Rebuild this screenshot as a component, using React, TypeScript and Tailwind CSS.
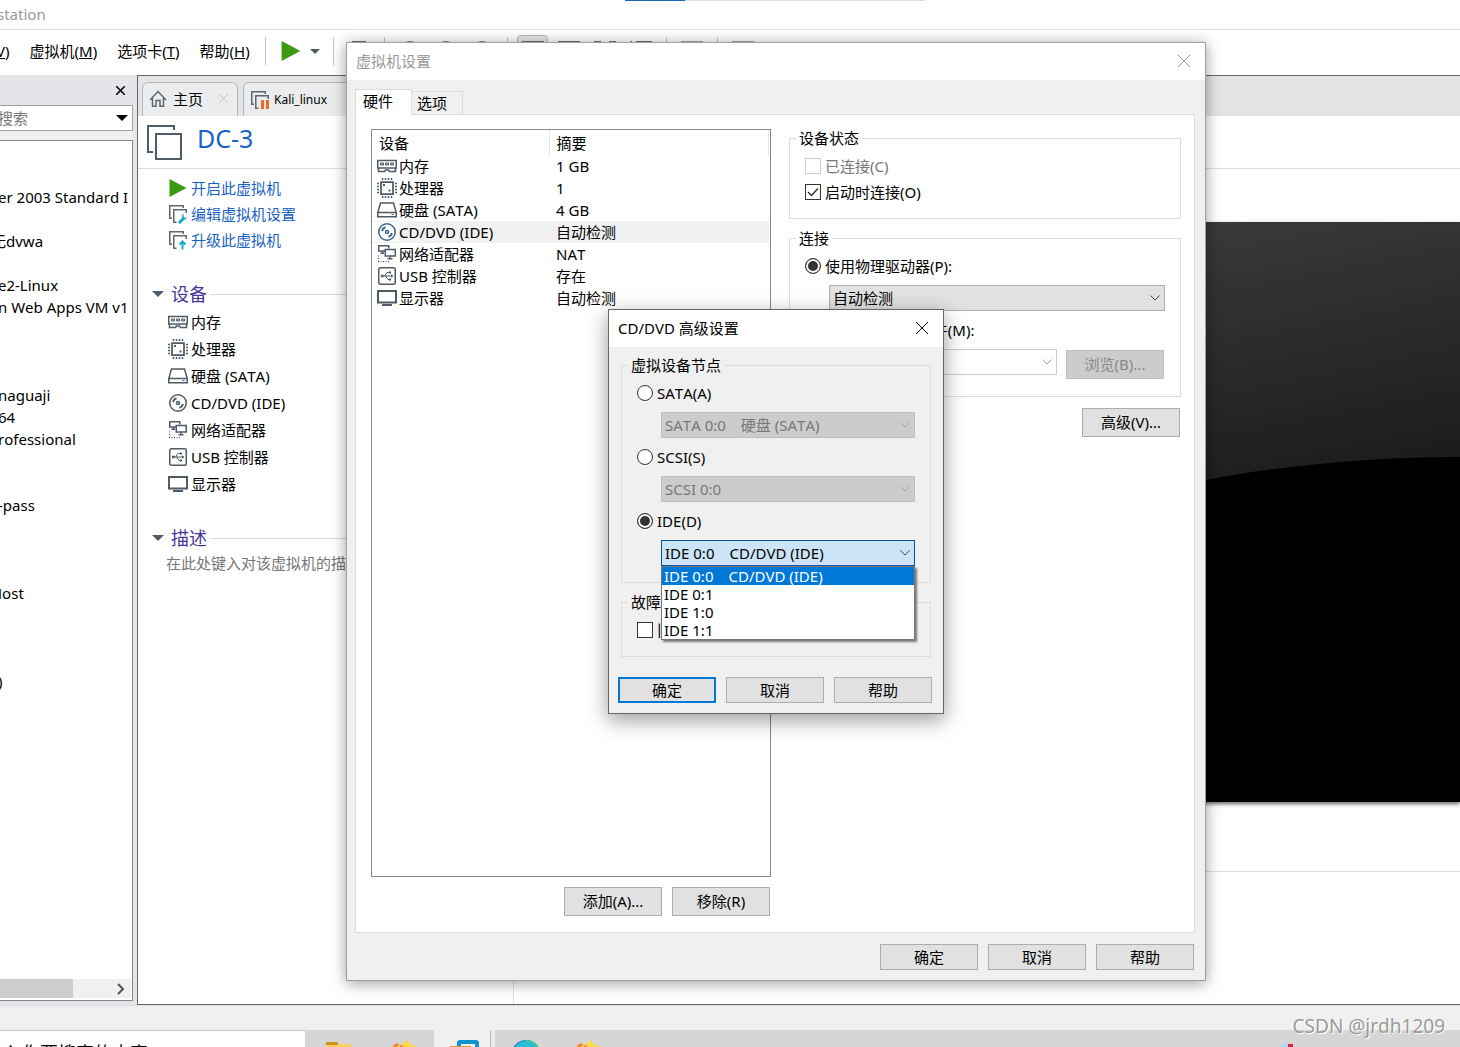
import type { ReactNode } from "react";

type DeviceKind = "memory" | "cpu" | "disk" | "cd" | "network" | "usb" | "display";

interface Device {
  kind: DeviceKind;
  name: string;
  summary: string;
}

const devices: Device[] = [
  { kind: "memory", name: "内存", summary: "1 GB" },
  { kind: "cpu", name: "处理器", summary: "1" },
  { kind: "disk", name: "硬盘 (SATA)", summary: "4 GB" },
  { kind: "cd", name: "CD/DVD (IDE)", summary: "自动检测" },
  { kind: "network", name: "网络适配器", summary: "NAT" },
  { kind: "usb", name: "USB 控制器", summary: "存在" },
  { kind: "display", name: "显示器", summary: "自动检测" },
];

// empty strings are rows whose names are scrolled out of view
const library = [
  "", "", "er 2003 Standard I", "", "无dvwa", "", "e2-Linux", "n Web Apps VM v1",
  "", "", "", "naguaji", "64", "rofessional", "", "", "-pass", "", "", "",
  "Host", "", "", "", ")",
];

const ideNodes = ["IDE 0:0\u3000CD/DVD (IDE)", "IDE 0:1", "IDE 1:0", "IDE 1:1"];

function DeviceIcon({ kind, className = "text-[#4f5b66]" }: { kind: DeviceKind; className?: string }) {
  const shapes: Record<DeviceKind, ReactNode> = {
    memory: (
      <>
        <path d="M.75 4.5h18.5V12H.75z" />
        <path d="M1.5 12v3.5h6l1-1.500h3l1 1.500h6V12" strokeWidth="1.5" />
        <path d="M3.5 7h3v2h-3zM8.5 7h3v2h-3zM13.5 7h3v2h-3z" fill="currentColor" fillOpacity=".35" strokeWidth="1" />
      </>
    ),
    cpu: (
      <>
        <path d="M4 4h12v12H4z" strokeWidth="1.75" />
        <path
          d="M5.5 0v2M8.5 0v2M11.5 0v2M14.5 0v2M5.5 18v2M8.5 18v2M11.5 18v2M14.5 18v2M0 5.5h2M0 8.5h2M0 11.5h2M0 14.5h2M18 5.5h2M18 8.5h2M18 11.5h2M18 14.5h2"
        />
        <path d="M6 6h2v2H6zM11.500 11.500h2v2h-2z" fill="currentColor" stroke="none" />
      </>
    ),
    disk: (
      <>
        <path d="M3.5 3h13l2.75 9.5v4.25H.75V12.5z" />
        <path d="M.75 12.5h18.5" />
        <path d="M14.5 14.5h2" strokeWidth="1" />
      </>
    ),
    cd: (
      <>
        <circle cx="10" cy="10" r="8.25" />
        <circle cx="10" cy="10" r="1.5" />
        <path d="M5 9a5.2 5.2 0 0 1 3.5-3.7M15 11a5.2 5.2 0 0 1-3.5 3.7" strokeWidth="2" />
      </>
    ),
    network: (
      <>
        <path d="M8 7H1.75V1.75h10V4.5" />
        <path d="M8.25 5.5h10V12h-10z" />
        <path d="M13 12.5v2M10.5 14.75h5M5.5 7v2M3.5 9.25H7" />
        <path d="M1.5 11.5v6M1 17.5h12" strokeDasharray="1 1.5" strokeWidth="1.25" />
      </>
    ),
    usb: (
      <>
        <rect x="1.75" y="1.75" width="16.5" height="16.5" rx="1.5" />
        <path d="M4.5 10h10M7.5 10l2.5-3.5h2M8.5 10l2.5 3.5h1.5" strokeWidth="1" />
        <path d="M4 8.75h2.5v2.5H4zM12 5.5h2v2h-2zM12 12.5h2v2h-2zM14 8.25l2.5 1.75-2.5 1.75z" fill="currentColor" stroke="none" />
      </>
    ),
    display: (
      <>
        <path d="M1 3h18v11.5H1z" strokeWidth="2" />
        <path d="M5 17h10" strokeWidth="2" />
      </>
    ),
  };
  return (
    <svg viewBox="0 0 20 20" className={`size-5 shrink-0 ${className}`} fill="none" stroke="currentColor" strokeWidth="1.5">
      {shapes[kind]}
    </svg>
  );
}

function StackIcon({ badge }: { badge?: ReactNode }) {
  return (
    <svg viewBox="0 0 20 20" className="size-5 shrink-0" fill="none" stroke="#5c6770" strokeWidth="1.5">
      <path d="M4 14.25H1.75V1.75h13.5V4" />
      <path d="M8.5 18.25H5.75V5.75h12.5V9" />
      {badge}
    </svg>
  );
}

function CloseIcon({ className }: { className: string }) {
  return (
    <svg viewBox="0 0 12 12" className={`shrink-0 ${className}`} fill="none" stroke="currentColor">
      <path d="M0 0l12 12M12 0L0 12" />
    </svg>
  );
}

function PlayIcon({ className }: { className: string }) {
  return (
    <svg viewBox="0 0 20 20" className={`shrink-0 ${className}`}>
      <path d="M1.5 1l17 9-17 9z" fill="#3c9a12" />
    </svg>
  );
}

function Caret({ className }: { className: string }) {
  return (
    <svg viewBox="0 0 12 6" className={`shrink-0 ${className}`}>
      <path d="M0 0h12L6 6z" fill="currentColor" />
    </svg>
  );
}

interface PushButtonProps {
  children: ReactNode;
  tall?: boolean;
  primary?: boolean;
  disabled?: boolean;
}

function PushButton({ children, tall, primary, disabled }: PushButtonProps) {
  return (
    <button
      type="button"
      disabled={disabled}
      className={`w-[98px] shrink-0 bg-[#e1e1e1] leading-5 disabled:border-[#bfbfbf] disabled:bg-[#cccccc] disabled:text-[#8a8a8a] ${
        tall ? "h-[29px] pb-0.5" : "h-[26px]"
      } ${primary ? "border-2 border-[#0078d7]" : "border border-[#adadad]"}`}
    >
      {children}
    </button>
  );
}

function Combo({ label, options, className, disabled }: { label: string; options: string[]; className: string; disabled?: boolean }) {
  return (
    <div className="relative">
      <select aria-label={label} disabled={disabled} className={`block h-[26px] w-full appearance-none border pl-[3px] opacity-100 ${className}`}>
        {options.map((option) => (
          <option key={option}>{option}</option>
        ))}
      </select>
      <svg
        viewBox="0 0 10 6"
        className={`pointer-events-none absolute top-2.5 right-[5px] h-1.5 w-2.5 ${disabled ? "text-[#a5a5a5]" : "text-[#444]"}`}
        fill="none"
        stroke="currentColor"
      >
        <path d="M.5.5L5 5 9.5.5" />
      </svg>
    </div>
  );
}

function Check({ label, checked, disabled }: { label: string; checked?: boolean; disabled?: boolean }) {
  return (
    <label className={`relative flex h-[26px] items-center gap-1 ${disabled ? "text-[#777]" : ""}`}>
      <input
        type="checkbox"
        defaultChecked={checked}
        disabled={disabled}
        className="peer size-4 shrink-0 appearance-none border border-[#333] bg-white disabled:border-[#ccc]"
      />
      <svg viewBox="0 0 16 16" className="absolute left-0 hidden size-4 peer-checked:block" fill="none" stroke="#333" strokeWidth="1.5">
        <path d="M3 8l3.5 3.5L13 4.5" />
      </svg>
      {label}
    </label>
  );
}

function Radio({ label, name, checked }: { label: string; name: string; checked?: boolean }) {
  return (
    <label className="flex h-[26px] items-center gap-1">
      <input
        type="radio"
        name={name}
        defaultChecked={checked}
        className="size-4 shrink-0 appearance-none rounded-full border border-[#333] bg-white checked:bg-[#333] checked:shadow-[inset_0_0_0_2px_#fff]"
      />
      {label}
    </label>
  );
}

function ToolSeparator() {
  return <div className="mx-[7px] h-7 w-px bg-[#c4c4c4]" />;
}

function ToolButton({ children, label, active }: { children: ReactNode; label: string; active?: boolean }) {
  return (
    <button type="button" aria-label={label} className="flex w-9 justify-center">
      <span className={`flex h-[33px] w-[31px] items-center justify-center rounded-sm ${active ? "border border-[#b4b8bc] bg-[#e3e6e8]" : ""}`}>
        <svg viewBox="0 0 22 20" className="h-5 w-[22px] shrink-0" fill="none" stroke="#6b757d" strokeWidth="2">
          {children}
        </svg>
      </span>
    </button>
  );
}

function MenuBar() {
  return (
    <div className="flex h-[45px] shrink-0 items-center bg-white pb-[3px]">
      <nav className="-ml-1 flex shrink-0 gap-5 whitespace-nowrap">
        <button type="button"><u>V</u>)</button>
        <button type="button">虚拟机(<u>M</u>)</button>
        <button type="button">选项卡(<u>T</u>)</button>
        <button type="button">帮助(<u>H</u>)</button>
      </nav>
      <div className="ml-[15px] h-7 w-px bg-[#c4c4c4]" />
      <button type="button" aria-label="开启" className="ml-3.5 flex items-center gap-2">
        <PlayIcon className="size-[22px]" />
        <Caret className="h-[5px] w-2.5 text-[#4f5b66]" />
      </button>
      <div className="ml-1.5 flex items-center">
        <ToolSeparator />
        <ToolButton label="发送"><path d="M5 1h12v18H5z" /></ToolButton>
        <ToolSeparator />
        <ToolButton label="拍摄快照"><circle cx="11" cy="10" r="9" /></ToolButton>
        <ToolButton label="恢复快照"><circle cx="11" cy="10" r="9" /></ToolButton>
        <ToolButton label="管理快照"><circle cx="11" cy="10" r="9" /></ToolButton>
        <ToolSeparator />
        <ToolButton label="显示库" active><path d="M1 1h20v18H1zM8 2v16" /></ToolButton>
        <ToolButton label="缩略图"><path d="M1 1h20v18H1zM1 13h20" /></ToolButton>
        <ToolButton label="全屏"><path d="M1 6V1h6M15 1h6v5M21 14v5h-6M7 19H1v-5" /></ToolButton>
        <ToolButton label="Unity"><path d="M0 0l4 4M7 1h14v12H7z" /></ToolButton>
        <ToolSeparator />
        <ToolButton label="控制台"><path d="M1 1h20v18H1z" stroke="#a5a9ad" /></ToolButton>
        <ToolSeparator />
        <ToolButton label="拉伸"><path d="M1 1h20v18H1z" stroke="#a5a9ad" /></ToolButton>
      </div>
    </div>
  );
}

function LibraryPanel() {
  return (
    <aside className="w-[137px] shrink-0 bg-[#e3e5e9] pb-1">
      <div className="flex h-full w-[133px] flex-col">
        <div className="flex h-[30px] shrink-0 items-center justify-end pr-2">
          <button type="button" aria-label="关闭库" className="text-black">
            <svg viewBox="0 0 9 9" className="size-[9px]" fill="none" stroke="currentColor" strokeWidth="1.5">
              <path d="M0 0l9 9M9 0L0 9" />
            </svg>
          </button>
        </div>
        <div className="flex h-[26px] shrink-0 items-center border border-l-0 border-[#a0a4a9] bg-white pr-1">
          <input
            aria-label="搜索"
            placeholder="搜索"
            className="-ml-0.5 w-full min-w-0 bg-transparent placeholder:text-[#777] focus:outline-none"
          />
          <Caret className="h-1.5 w-3 text-black" />
        </div>
        <div className="h-[9px] shrink-0 bg-[#f0f0f0]" />
        <div className="flex min-h-0 flex-1 flex-col overflow-hidden border border-l-0 border-[#828790] bg-white">
          <ul className="-ml-0.5 min-h-0 flex-1 overflow-hidden pt-px whitespace-nowrap">
            {library.map((name, idx) => (
              <li key={idx} className={`h-[22px] leading-[22px] ${name === "Host" || name === "无dvwa" ? "-indent-[7px]" : ""}`}>
                {name}
              </li>
            ))}
          </ul>
          <div className="mr-px mb-0.5 flex h-[19px] shrink-0 items-center justify-between bg-[#f0f0f0]">
            <div className="h-full w-[73px] bg-[#cdcdcd]" />
            <svg viewBox="0 0 8 12" className="mr-1.5 h-3 w-2" fill="none" stroke="#505050" strokeWidth="2">
              <path d="M1 1l5 5-5 5" />
            </svg>
          </div>
        </div>
      </div>
    </aside>
  );
}

function SectionHeading({ children }: { children: ReactNode }) {
  return (
    <div className="flex h-7 items-center pl-3.5">
      <Caret className="mr-[7px] h-1.5 w-3 text-[#4f5b66]" />
      <h2 className="text-lg text-[#46369a]">{children}</h2>
      <div className="ml-[3px] h-px flex-1 bg-[#d9d9d9]" />
    </div>
  );
}

function VmSummary() {
  return (
    <div className="w-[376px] shrink-0 border-r border-[#dcdcdc]">
      <ul className="pt-1.5 pl-[30px] text-[#1a63c4]">
        <li>
          <a href="#start" className="flex h-[26px] items-center gap-[3px]">
            <PlayIcon className="size-5" />
            开启此虚拟机
          </a>
        </li>
        <li>
          <a href="#edit" className="flex h-[26px] items-center gap-[3px]">
            <StackIcon
              badge={
                <>
                  <path d="M11 19l5-5" stroke="#1fa9c9" strokeWidth="3" />
                  <path d="M15.5 9.5a3 3 0 1 0 4 4l-2.5.5-1.5-1.5z" fill="#1fa9c9" stroke="none" />
                </>
              }
            />
            编辑虚拟机设置
          </a>
        </li>
        <li>
          <a href="#upgrade" className="flex h-[26px] items-center gap-[3px]">
            <StackIcon badge={<path d="M14.5 19.5V12M11.5 14.5l3-3 3 3" stroke="#1fa9c9" strokeWidth="2" />} />
            升级此虚拟机
          </a>
        </li>
      </ul>
      <div className="mt-[27px]">
        <SectionHeading>设备</SectionHeading>
        <ul className="pl-[30px]">
          {devices.map((device) => (
            <li key={device.kind} className="flex h-[27px] items-center gap-[3px]">
              <DeviceIcon kind={device.kind} />
              {device.name}
            </li>
          ))}
        </ul>
      </div>
      <div className="mt-[27px]">
        <SectionHeading>描述</SectionHeading>
        <p className="pl-7 leading-[22px] text-[#777]">在此处键入对该虚拟机的描述。</p>
      </div>
    </div>
  );
}

function VmScreen() {
  return (
    <div className="min-w-0 flex-1">
      <div className="border-b border-[#dcdcdc] pt-[53px] pb-[69px]">
        <svg viewBox="0 0 946 580" preserveAspectRatio="none" className="block h-[580px] w-full shadow-[0_2px_4px_rgba(0,0,0,0.6)]">
          <defs>
            <linearGradient id="glass" x1="0.7" y1="0" x2="0.85" y2="0.45">
              <stop offset="0" stopColor="#3a3a3a" />
              <stop offset="1" stopColor="#1c1c1c" />
            </linearGradient>
          </defs>
          <path d="M0 0h946v580H0z" fill="url(#glass)" />
          <path d="M0 580V480Q300 320 692 258C770 243 860 235 946 235V580z" fill="#000" />
        </svg>
      </div>
    </div>
  );
}

function Workspace() {
  return (
    <main className="flex min-w-0 flex-1 flex-col border-t border-b border-l border-[#666] bg-white">
      <div className="flex h-10 shrink-0 items-end bg-[#e3e4e6] pl-1">
        <div className="flex h-[34px] w-24 items-center rounded-t-md border border-b-0 border-[#b3b5b8] bg-[#ebecee] pb-0.5 pl-1.5">
          <svg viewBox="0 0 18 18" className="mr-1.5 size-[18px] shrink-0" fill="none" stroke="#5c6770" strokeWidth="1.5">
            <path d="M1 10l8-8.5 8 8.5M3.5 8v8.25H7V10.5h4v5.75h3.5V8" />
          </svg>
          主页
          <button type="button" aria-label="关闭主页" className="ml-4 text-[#b8b8b8]">
            <CloseIcon className="size-[9px]" />
          </button>
        </div>
        <div className="ml-[5px] flex h-[34px] w-40 items-center gap-1 rounded-t-md border border-b-0 border-[#b3b5b8] bg-[#ebecee] pl-1.5 text-xs">
          <StackIcon
            badge={
              <>
                <path d="M9.5 9h10v11h-10z" fill="#ebecee" stroke="none" />
                <path d="M12.5 10v9M17.5 10v9" stroke="#ee6b21" strokeWidth="3" />
              </>
            }
          />
          Kali_linux
        </div>
      </div>
      <header className="flex h-[53px] shrink-0 items-center gap-[15px] border-b border-[#dcdcdc] pl-[9px]">
        <svg viewBox="0 0 35 35" className="size-[35px]" fill="none" stroke="#4f5b66" strokeWidth="2">
          <path d="M6 27H1V1h26v4" />
          <path d="M9 9h25v25H9z" />
        </svg>
        <h1 className="pb-2 text-[25px] leading-8 text-[#1a63c4]">DC-3</h1>
      </header>
      <div className="flex min-h-0 flex-1">
        <VmSummary />
        <VmScreen />
      </div>
    </main>
  );
}

function DeviceTable() {
  return (
    <div className="h-[748px] border border-[#828790] bg-white pr-px">
      <table className="w-full border-collapse text-left leading-5">
        <thead>
          <tr className="h-[25px]">
            <th className="w-[177px] border-r border-[#e5e5e5] pl-[7px] font-normal">设备</th>
            <th className="border-r border-[#e5e5e5] pl-[7px] font-normal">摘要</th>
          </tr>
        </thead>
        <tbody>
          {devices.map((device) => {
            const selected = device.kind === "cd";
            return (
              <tr key={device.kind} className={`h-[22px] ${selected ? "bg-[#f0f0f0]" : ""}`}>
                <td className="p-0">
                  <div className="flex items-center">
                    <span className="bg-white pr-0.5 pl-[5px]">
                      <DeviceIcon kind={device.kind} className={selected ? "text-[#3d6690]" : "text-[#4f5b66]"} />
                    </span>
                    {device.name}
                  </div>
                </td>
                <td className="p-0 pl-[7px]">{device.summary}</td>
              </tr>
            );
          })}
        </tbody>
      </table>
    </div>
  );
}

function SettingsWindow() {
  return (
    <section
      aria-label="虚拟机设置"
      className="absolute top-[42px] left-[346px] w-[860px] border border-[#a0a0a0] bg-[#f0f0f0] shadow-[0_2px_14px_rgba(0,0,0,0.4)]"
    >
      <header className="flex h-[37px] items-center justify-between bg-white pr-[15px] pb-0.5 pl-[9px] text-[#999]">
        <h2>虚拟机设置</h2>
        <button type="button" aria-label="关闭">
          <CloseIcon className="size-3" />
        </button>
      </header>
      <div className="px-2 pt-[9px] pb-2.5">
        <div role="tablist" className="flex items-end">
          <button type="button" role="tab" aria-selected="true" className="relative z-10 -mb-px h-[26px] w-[57px] border border-b-0 border-[#dcdcdc] bg-white pb-1 pl-[7px] text-left leading-5">
            硬件
          </button>
          <button type="button" role="tab" aria-selected="false" className="h-[23px] w-[51px] border border-b-0 border-l-0 border-[#dcdcdc] pl-[5px] text-left leading-5">
            选项
          </button>
        </div>
        <div className="mr-0.5 flex gap-[18px] border border-[#dcdcdc] bg-white pt-[13px] pr-[13px] pb-4 pl-[15px]">
          <div className="w-[400px] shrink-0 pt-px">
            <DeviceTable />
            <div className="mt-2.5 mr-px flex justify-end gap-2.5">
              <PushButton tall>添加(A)...</PushButton>
              <PushButton tall>移除(R)</PushButton>
            </div>
          </div>
          <div className="min-w-0 flex-1">
            <fieldset className="h-[91px] border border-[#dcdcdc] px-[15px]">
              <legend className="-ml-[9px] px-[3px] leading-5">设备状态</legend>
              <div className="pt-[5px]">
                <Check label="已连接(C)" disabled />
                <Check label="启动时连接(O)" checked />
              </div>
            </fieldset>
            <fieldset className="mt-[9px] border border-[#dcdcdc] px-[15px] pb-[17px]">
              <legend className="-ml-[9px] px-[3px] leading-5">连接</legend>
              <div className="pt-[5px]">
                <Radio label="使用物理驱动器(P):" name="source" checked />
                <div className="mt-1.5 pl-6">
                  <Combo label="物理驱动器" options={["自动检测"]} className="border-[#adadad] bg-[#e1e1e1]" />
                </div>
                <div className="mt-1.5">
                  <Radio label="使用 ISO 映像文件(M):" name="source" />
                </div>
                <div className="mt-1.5 mr-px flex items-start gap-[9px] pl-6">
                  <div className="flex-1">
                    <Combo label="ISO 映像文件" options={[""]} disabled className="border-[#ccc] bg-white" />
                  </div>
                  <div className="pt-px">
                    <PushButton tall disabled>浏览(B)...</PushButton>
                  </div>
                </div>
              </div>
            </fieldset>
            <div className="mt-[11px] mr-px flex justify-end">
              <PushButton tall>高级(V)...</PushButton>
            </div>
          </div>
        </div>
        <div className="mt-[11px] mr-[3px] flex justify-end gap-2.5">
          <PushButton>确定</PushButton>
          <PushButton>取消</PushButton>
          <PushButton>帮助</PushButton>
        </div>
      </div>
    </section>
  );
}

function AdvancedWindow() {
  return (
    <section
      aria-label="CD/DVD 高级设置"
      className="absolute top-[309px] left-[608px] w-[336px] border border-[#666] bg-[#f0f0f0] shadow-[0_6px_20px_rgba(0,0,0,0.4)]"
    >
      <header className="flex h-[37px] items-center justify-between bg-white pr-[15px] pb-0.5 pl-[9px]">
        <h2>CD/DVD 高级设置</h2>
        <button type="button" aria-label="关闭">
          <CloseIcon className="size-3" />
        </button>
      </header>
      <div className="px-3 pt-2 pb-2.5">
        <fieldset className="border border-[#dcdcdc] px-[15px] pb-4">
          <legend className="-ml-[9px] px-[3px] leading-5">虚拟设备节点</legend>
          <div className="flex flex-col gap-1.5 pt-[5px]">
            <Radio label="SATA(A)" name="node" />
            <div className="pl-6">
              <Combo label="SATA 节点" options={["SATA 0:0\u3000硬盘 (SATA)"]} disabled className="border-[#bfbfbf] bg-[#ccc] text-[#777]" />
            </div>
            <Radio label="SCSI(S)" name="node" />
            <div className="pl-6">
              <Combo label="SCSI 节点" options={["SCSI 0:0"]} disabled className="border-[#bfbfbf] bg-[#ccc] text-[#777]" />
            </div>
            <Radio label="IDE(D)" name="node" checked />
            <div className="relative pl-6">
              <Combo label="IDE 节点" options={ideNodes} className="border-[#005499] bg-[#cce4f7]" />
              <ul
                role="listbox"
                aria-label="IDE 节点选项"
                className="absolute top-full right-0 left-6 z-10 border border-[#777] bg-white shadow-[2px_2px_2px_rgba(0,0,0,0.5)]"
              >
                {ideNodes.map((node, idx) => (
                  <li
                    key={node}
                    role="option"
                    aria-selected={idx === 0}
                    className={`h-[18px] pl-0.5 leading-[18px] ${idx === 0 ? "bg-[#0078d7] text-white" : ""}`}
                  >
                    {node}
                  </li>
                ))}
              </ul>
            </div>
          </div>
        </fieldset>
        <fieldset className="mt-[9px] border border-[#dcdcdc] px-[15px] pb-[13px]">
          <legend className="-ml-[9px] px-[3px] leading-5">故障排除</legend>
          <div className="pt-[5px]">
            <Check label="旧版仿真(L)" />
          </div>
        </fieldset>
        <div className="-ml-[3px] mt-5 flex gap-2.5">
          <PushButton primary>确定</PushButton>
          <PushButton>取消</PushButton>
          <PushButton>帮助</PushButton>
        </div>
      </div>
    </section>
  );
}

function SparkIcon() {
  return (
    <svg viewBox="0 0 28 20" className="h-5 w-7" fill="none">
      <path d="M2 8l5-5 4 2-4 15H4z" fill="#f0872b" />
      <path d="M8 6l6-2 4-4 3 5 7 1-5 6 1 8H9z" fill="#ffd83b" />
      <path d="M11 5l4 2-2 4z" fill="#e9557a" />
    </svg>
  );
}

function TaskBar() {
  return (
    <footer className="flex h-[17px] shrink-0 overflow-hidden bg-[#d6d6d6]">
      <div className="w-[305px] shrink-0 border-t border-[#c8c8c8] bg-white pt-2.5 pl-1 text-lg leading-6 whitespace-nowrap">
        入你要搜索的内容
      </div>
      <div className="flex w-[129px] shrink-0 items-start gap-9 pt-2.5 pl-5">
        <svg viewBox="0 0 28 20" className="h-5 w-7">
          <path d="M1 2h12v4H1z" fill="#cf9716" />
          <path d="M1 5h12l2-1h12v16H1z" fill="#f8cf62" />
        </svg>
        <SparkIcon />
      </div>
      <div className="w-14 shrink-0 bg-[#f0f0f0] pt-2.5 pl-4">
        <svg viewBox="0 0 30 20" className="h-5 w-[30px]" fill="none" strokeWidth="4">
          <path d="M9 16V3q0-1 1-1h16q1 0 1 1v17" stroke="#0f93d2" />
          <path d="M2 20V8h17v12" stroke="#e8952c" />
        </svg>
      </div>
      <div className="w-[5px] shrink-0 border-l border-[#bdbdbd] bg-[#ebebeb]" />
      <div className="flex flex-1 items-start gap-8 pt-2.5 pl-4">
        <svg viewBox="0 0 30 30" className="size-[30px]">
          <circle cx="15" cy="15" r="15" fill="#1b8fd6" />
          <path d="M15 0a15 15 0 0 1 15 15H13z" fill="#43cf7c" />
          <path d="M2 9Q8 0 17 1q7 1 9 8z" fill="#2bbdd0" />
        </svg>
        <SparkIcon />
      </div>
      <svg viewBox="0 0 20 20" className="mt-3.5 mr-[163px] size-5 shrink-0">
        <circle cx="9" cy="9" r="9" fill="#a9d8ee" />
        <path d="M11 0h5v6h-5z" fill="#e02040" />
      </svg>
    </footer>
  );
}

export default function App() {
  return (
    <div className="relative flex h-screen flex-col overflow-hidden bg-[#f0f0f0] font-['Noto_Sans','Noto_Sans_CJK_SC',sans-serif] text-[15px] leading-5 text-black [font-kerning:none]">
      <div className="flex h-[30px] shrink-0 items-center border-b border-[#dedede] bg-white pb-0.5 text-[#999]">
        <span className="-ml-[3px]">station</span>
      </div>
      <div className="absolute top-0 left-[625px] h-px w-[300px] bg-[#ddd]">
        <div className="h-full w-[60px] bg-[#1a63b4]" />
      </div>
      <MenuBar />
      <div className="flex min-h-0 flex-1">
        <LibraryPanel />
        <Workspace />
      </div>
      <div className="h-[25px] shrink-0 border-t border-[#e0e0e0]" />
      <TaskBar />
      <SettingsWindow />
      <AdvancedWindow />
      <p className="absolute right-[15px] bottom-[9px] text-[19px] leading-6 text-[#9a9a9a] [text-shadow:1px_1px_0_#fff]">CSDN @jrdh1209</p>
    </div>
  );
}
